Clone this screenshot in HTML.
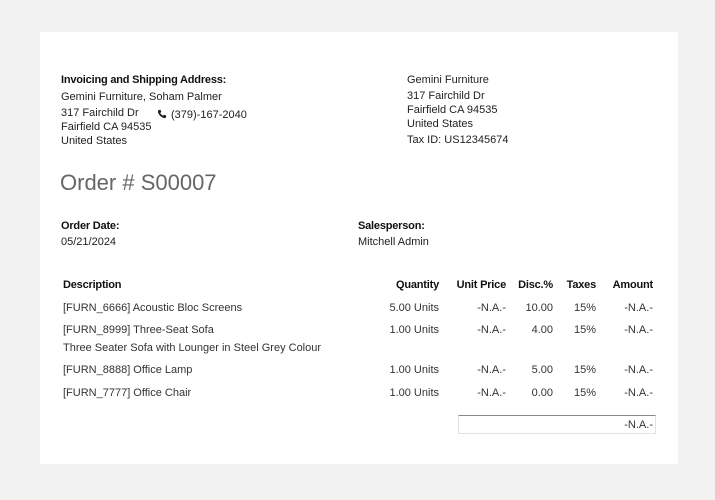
<!DOCTYPE html>
<html><head><meta charset="utf-8"><style>
body{margin:0;width:715px;height:500px;background:#f2f2f2;font-family:"Liberation Sans",sans-serif;color:#222;position:relative;overflow:hidden}
.card{position:absolute;left:40px;top:32px;width:638px;height:432px;background:#fff}
.t{position:absolute;font-size:11px;line-height:14px;white-space:nowrap;letter-spacing:0}
.b{font-weight:bold;color:#111;letter-spacing:-0.2px}
.r{text-align:right}
.g{color:#333}
</style></head><body>
<div class="card"></div>
<div class="t b" style="left:61px;top:73px">Invoicing and Shipping Address:</div>
<div class="t" style="left:61px;top:90px">Gemini Furniture, Soham Palmer</div>
<div class="t" style="left:61px;top:106px">317 Fairchild Dr</div>
<svg style="position:absolute;left:157px;top:109px" width="10" height="10" viewBox="0 0 10 10"><path d="M1.5 1 L3.5 0.8 L4.3 3 L3.2 4 Q4.3 6 6 6.8 L7 5.7 L9.2 6.5 L9 8.5 Q8 9.5 6.5 9 Q2.5 7.5 1 3.5 Q0.6 2 1.5 1Z" fill="#222"/></svg>
<div class="t" style="left:171px;top:108px">(379)-167-2040</div>
<div class="t" style="left:61px;top:120px">Fairfield CA 94535</div>
<div class="t" style="left:61px;top:134px">United States</div>
<div class="t" style="left:407px;top:73px">Gemini Furniture</div>
<div class="t" style="left:407px;top:89px">317 Fairchild Dr</div>
<div class="t" style="left:407px;top:103px">Fairfield CA 94535</div>
<div class="t" style="left:407px;top:117px">United States</div>
<div class="t" style="left:407px;top:133px">Tax ID: US12345674</div>
<div class="t" style="left:60px;top:169px;font-size:22px;line-height:28px;color:#666;letter-spacing:0">Order # S00007</div>
<div class="t b" style="left:61px;top:219px">Order Date:</div>
<div class="t" style="left:61px;top:235px">05/21/2024</div>
<div class="t b" style="left:358px;top:219px">Salesperson:</div>
<div class="t" style="left:358px;top:235px">Mitchell Admin</div>
<div class="t b" style="left:63px;top:278px">Description</div>
<div class="t b r" style="right:276px;top:278px">Quantity</div>
<div class="t b r" style="right:209px;top:278px">Unit Price</div>
<div class="t b r" style="right:162px;top:278px">Disc.%</div>
<div class="t b r" style="right:119px;top:278px">Taxes</div>
<div class="t b r" style="right:62px;top:278px">Amount</div>

<div class="t g" style="left:63px;top:301px">[FURN_6666] Acoustic Bloc Screens</div>
<div class="t g r" style="right:276px;top:301px">5.00 Units</div>
<div class="t g r" style="right:209px;top:301px">-N.A.-</div>
<div class="t g r" style="right:162px;top:301px">10.00</div>
<div class="t g r" style="right:119px;top:301px">15%</div>
<div class="t g r" style="right:62px;top:301px">-N.A.-</div>

<div class="t g" style="left:63px;top:323px">[FURN_8999] Three-Seat Sofa</div>
<div class="t g" style="left:63px;top:341px">Three Seater Sofa with Lounger in Steel Grey Colour</div>
<div class="t g r" style="right:276px;top:323px">1.00 Units</div>
<div class="t g r" style="right:209px;top:323px">-N.A.-</div>
<div class="t g r" style="right:162px;top:323px">4.00</div>
<div class="t g r" style="right:119px;top:323px">15%</div>
<div class="t g r" style="right:62px;top:323px">-N.A.-</div>

<div class="t g" style="left:63px;top:363px">[FURN_8888] Office Lamp</div>
<div class="t g r" style="right:276px;top:363px">1.00 Units</div>
<div class="t g r" style="right:209px;top:363px">-N.A.-</div>
<div class="t g r" style="right:162px;top:363px">5.00</div>
<div class="t g r" style="right:119px;top:363px">15%</div>
<div class="t g r" style="right:62px;top:363px">-N.A.-</div>

<div class="t g" style="left:63px;top:386px">[FURN_7777] Office Chair</div>
<div class="t g r" style="right:276px;top:386px">1.00 Units</div>
<div class="t g r" style="right:209px;top:386px">-N.A.-</div>
<div class="t g r" style="right:162px;top:386px">0.00</div>
<div class="t g r" style="right:119px;top:386px">15%</div>
<div class="t g r" style="right:62px;top:386px">-N.A.-</div>

<div style="position:absolute;left:458px;top:415px;width:196px;height:17px;border:1px solid #e2e2e2;border-top:1px solid #888"></div>
<div class="t g r" style="right:62px;top:418px">-N.A.-</div>
</body></html>
